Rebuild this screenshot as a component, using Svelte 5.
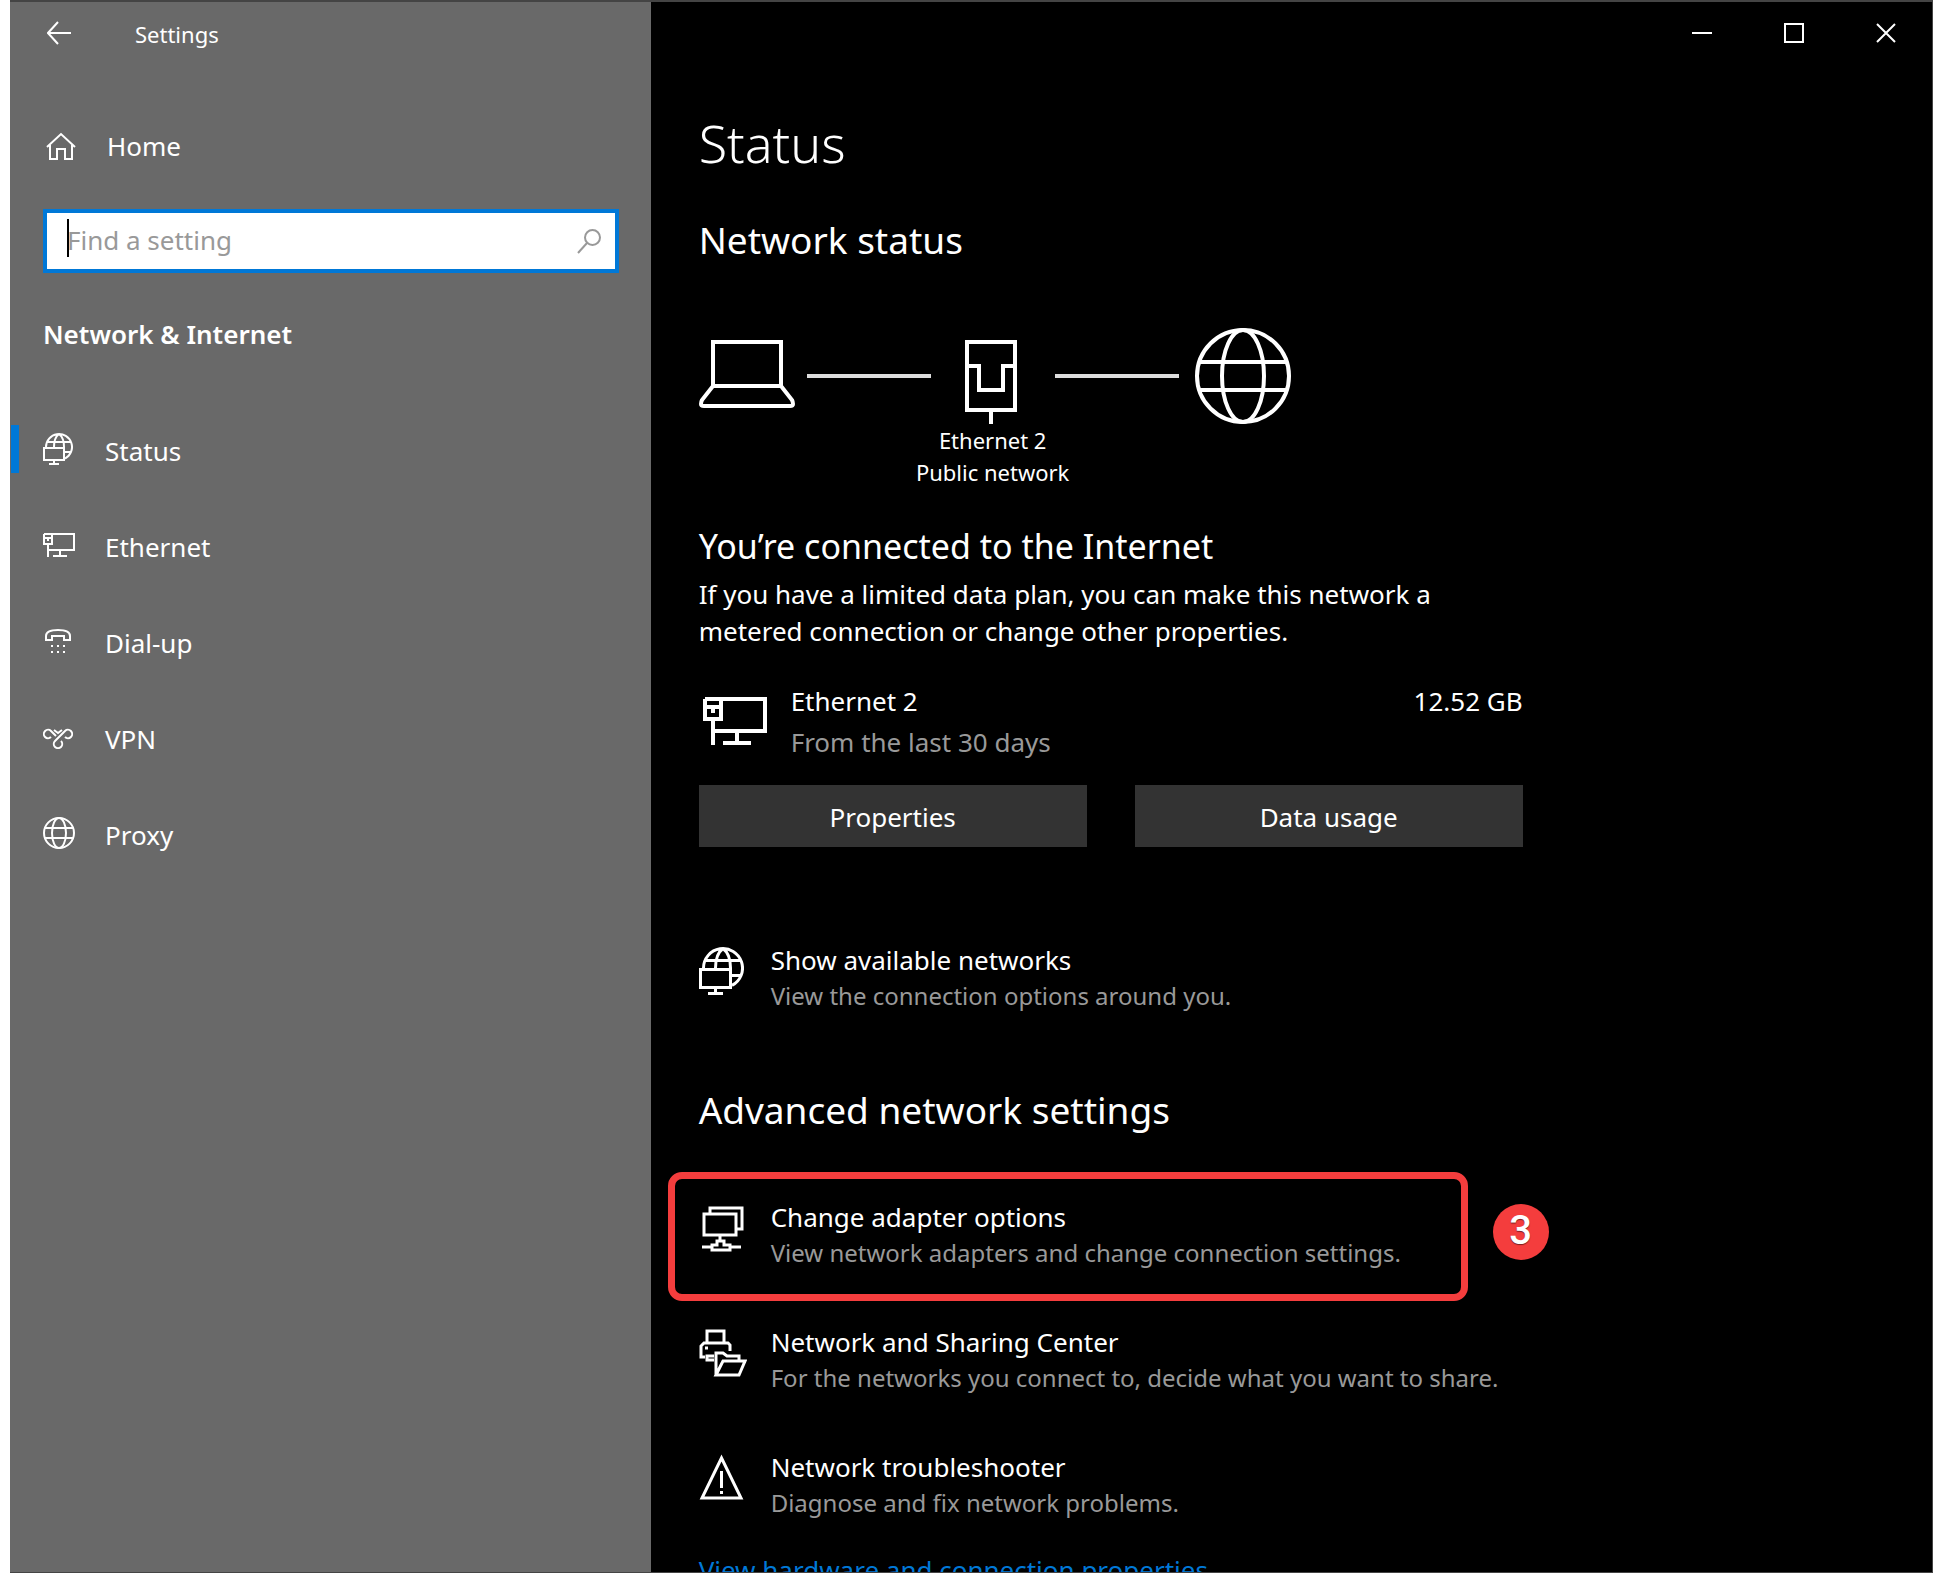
<script>
    let query = '';

    const navItems = [
        { label: 'Status', icon: 'globeMonitor', active: true },
        { label: 'Ethernet', icon: 'ethernet' },
        { label: 'Dial-up', icon: 'phone' },
        { label: 'VPN', icon: 'vpn' },
        { label: 'Proxy', icon: 'globe' }
    ];

    const advanced = [
        {
            title: 'Change adapter options',
            text: 'View network adapters and change connection settings.',
            icon: 'adapter',
            step: 3
        },
        {
            title: 'Network and Sharing Center',
            text: 'For the networks you connect to, decide what you want to share.',
            icon: 'sharing'
        },
        {
            title: 'Network troubleshooter',
            text: 'Diagnose and fix network problems.',
            icon: 'warning'
        }
    ];
</script>

{#snippet icon(name, scale = 1)}
    {#if name === 'globeMonitor'}
        <svg class="icon" width={30 * scale} height={32 * scale} viewBox="0 0 30 32">
            <path d="M3 14A13 13 0 1 1 22 25.6M4 9H28M21 19H28M16 1C12 4 11 9 11 14M16 1C20 4 21 9 21 14" />
            <path d="M1 15H21V27H1ZM11 27V31M6 31H16" />
        </svg>
    {:else if name === 'ethernet'}
        <svg class="icon" width={32 * scale} height={24 * scale} viewBox="0 0 32 24">
            <path d="M1 1H31V17H5M9 1V11H1V1M1 5H9M5 5V8M5 11V24M17 17V23M10 23H24" />
        </svg>
    {:else if name === 'phone'}
        <svg class="icon" width="30" height="24" viewBox="-2 0 30 24">
            <path d="M1 11V7C1 3 6 1 13 1S25 3 25 7V11H19V7H7V11Z" />
            <path d="M6 17H8M12 17H14M18 17H20M6 23H8M12 23H14M18 23H20" />
        </svg>
    {:else if name === 'vpn'}
        <svg class="icon" width="30" height="24" viewBox="0 -4 30 24">
            <path d="M8 8A4.200 4.200 0 1 1 8 2L13 7M11 1L15 4L19 1M22 8A4.200 4.200 0 1 0 22 2L12 12A4.200 4.200 0 1 0 18 12" />
        </svg>
    {:else if name === 'globe'}
        <svg class="icon" width="32" height="32" viewBox="0 0 32 32">
            <circle cx="16" cy="16" r="15" />
            <ellipse cx="16" cy="16" rx="7" ry="15" />
            <path d="M2 11H30M2 21H30" />
        </svg>
    {:else if name === 'adapter'}
        <svg class="icon thick" width="48" height="48" viewBox="0 0 48 48">
            <path d="M11 9V4H43V25H38M5 10H37V31H5ZM21 31V36M3 43H13M32 43H42M13 41H18V37H25V41H31V46H13Z" />
        </svg>
    {:else if name === 'sharing'}
        <svg class="icon thick" width="48" height="48" viewBox="0 0 48 48">
            <path d="M8 13V2H25V13M6 28H2V17L5 14H29L31 16V22M15 27H8V31H15M6 19H9" />
            <path d="M17 46V24H24L28 27H40V31M17 46L24 32H46L40 46Z" />
        </svg>
    {:else if name === 'warning'}
        <svg class="icon thick" width="45" height="48" viewBox="0 0 45 48">
            <path d="M22.500 4L42 44H3ZM22.500 17V34M22.500 37V40" />
        </svg>
    {/if}
{/snippet}

{#snippet linkRow(item)}
    <a class="row" class:marked={item.step} href="#{item.icon}">
        <span class="row-icon">{@render icon(item.icon, 1.5)}</span>
        <span class="row-text">
            <span>{item.title}</span>
            <span class="hint">{item.text}</span>
        </span>
        {#if item.step}
            <span class="step">{item.step}</span>
        {/if}
    </a>
{/snippet}

<div class="window">
    <aside class="sidebar">
        <header class="title-bar">
            <button class="back" aria-label="Back">
                <svg class="icon" width="24" height="28" viewBox="0 0 24 28">
                    <path d="M24 13H1M11 2L1 13L11 24" />
                </svg>
            </button>
            <span>Settings</span>
        </header>

        <a class="home" href="#home">
            <svg class="icon" width="30" height="28" viewBox="0 0 30 28">
                <path d="M1 15L15 2L29 15M4 13V27H11V17H19V27H26V13" />
            </svg>
            <span>Home</span>
        </a>

        <label class="search">
            <input type="text" placeholder="Find a setting" aria-label="Find a setting" bind:value={query} />
            <span class="caret"></span>
            <svg class="icon" width="24" height="25" viewBox="0 0 24 25">
                <circle cx="15.500" cy="8.500" r="7.500" />
                <path d="M10 14L1 24" />
            </svg>
        </label>

        <h2>Network &amp; Internet</h2>

        <nav>
            {#each navItems as item}
                <a class:active={item.active} href="#{item.label}">
                    <span class="nav-icon">{@render icon(item.icon)}</span>
                    <span class="nav-label">{item.label}</span>
                </a>
            {/each}
        </nav>
    </aside>

    <main>
        <div class="controls">
            <button aria-label="Minimize">
                <svg class="icon" width="20" height="20" viewBox="0 0 20 20"><path d="M0 10H20" /></svg>
            </button>
            <button aria-label="Maximize">
                <svg class="icon" width="20" height="20" viewBox="0 0 20 20"><path d="M1 1H19V19H1Z" /></svg>
            </button>
            <button aria-label="Close">
                <svg class="icon" width="20" height="20" viewBox="0 0 20 20"><path d="M1 1L19 19M19 1L1 19" /></svg>
            </button>
        </div>

        <div class="content">
            <h1>Status</h1>
            <h3>Network status</h3>

            <div class="diagram">
                <svg class="icon wide" width="96" height="72" viewBox="0 0 96 72">
                    <path d="M14 2H82V46H14ZM14 46L3 60Q2 62 2 64Q2 66 5 66H91Q94 66 94 64Q94 62 93 60L82 46" />
                </svg>
                <span class="wire"></span>
                <div class="adapter">
                    <svg class="icon wide" width="52" height="84" viewBox="0 0 52 84">
                        <path d="M2 2H50V70H2ZM2 26H14V50H38V26H50M26 70V84" />
                    </svg>
                </div>
                <span class="wire"></span>
                <svg class="icon wide internet" width="96" height="96" viewBox="0 0 96 96">
                    <circle cx="48" cy="48" r="46" />
                    <ellipse cx="48" cy="48" rx="21" ry="46" />
                    <path d="M5 34H91M5 62H91" />
                </svg>
            </div>
            <p class="caption">Ethernet 2<br />Public network</p>

            <h3 class="connected">You’re connected to the Internet</h3>
            <p class="plan">If you have a limited data plan, you can make this network a metered connection or change other properties.</p>

            <div class="usage">
                <span class="usage-icon">{@render icon('ethernet', 2)}</span>
                <div class="usage-text">
                    <span>Ethernet 2</span>
                    <span class="muted">From the last 30 days</span>
                </div>
                <span>12.52 GB</span>
            </div>
            <div class="buttons">
                <button>Properties</button>
                <button>Data usage</button>
            </div>

            {@render linkRow({
                title: 'Show available networks',
                text: 'View the connection options around you.',
                icon: 'globeMonitor'
            })}

            <h3 class="advanced">Advanced network settings</h3>
            <div class="rows">
                {#each advanced as item}
                    {@render linkRow(item)}
                {/each}
            </div>

            <a class="more" href="#hardware">View hardware and connection properties</a>
        </div>
    </main>
</div>

<style>
    :global(body) {
        background: #fff;
    }

    .window {
        display: grid;
        grid-template-columns: 1fr 2fr;
        box-sizing: border-box;
        height: calc(100vh - 7px);
        margin: 0 8px 0 10px;
        overflow: hidden;
        border: solid #444;
        border-width: 2px 1px 1px 0;
        background: #000;
        color: #fff;
        font-family: 'Noto Sans', 'Open Sans', sans-serif;
        font-size: 26px;
        line-height: 35px;
    }

    h1,
    h2,
    h3,
    p {
        margin: 0;
        font-weight: 400;
    }

    a {
        color: inherit;
        text-decoration: none;
    }

    button {
        padding: 0;
        border: 0;
        background: none;
        color: inherit;
        font: inherit;
    }

    .icon {
        display: block;
        flex: none;
        fill: none;
        stroke: currentColor;
        stroke-width: 2;
    }

    .icon.thick {
        stroke-width: 3;
    }

    .icon.wide {
        stroke-width: 4;
    }

    .sidebar {
        background: #696969;
    }

    .title-bar {
        display: flex;
        align-items: center;
        gap: 64px;
        height: 64px;
        padding-left: 37px;
        font-size: 22px;
    }

    .home {
        display: flex;
        align-items: center;
        gap: 31px;
        height: 64px;
        margin-top: 48px;
        padding-left: 36px;
    }

    .search {
        display: flex;
        position: relative;
        align-items: center;
        box-sizing: border-box;
        height: 64px;
        margin: 31px 32px 0 33px;
        padding: 0 14px 0 20px;
        border: 4px solid #0078d7;
        background: #fff;
        color: #999;
    }

    .search input {
        flex: 1;
        min-width: 0;
        padding: 0 0 2px;
        border: 0;
        outline: 0;
        background: none;
        color: #000;
        font: inherit;
    }

    .search input::placeholder {
        color: #999;
        opacity: 1;
    }

    .caret {
        position: absolute;
        top: 6px;
        left: 20px;
        width: 2px;
        height: 38px;
        background: #000;
    }

    h2 {
        margin: 44px 0 0 33px;
        font-size: 26px;
        font-weight: 600;
    }

    nav {
        margin-top: 49px;
    }

    nav a {
        display: flex;
        position: relative;
        align-items: center;
        height: 96px;
        padding-left: 33px;
    }

    nav a.active::before {
        position: absolute;
        left: 1px;
        width: 8px;
        height: 48px;
        background: #0078d7;
        content: '';
    }

    .nav-icon {
        display: flex;
        width: 62px;
    }

    .nav-label {
        padding-top: 4px;
    }

    main {
        min-width: 0;
    }

    .controls {
        display: flex;
        justify-content: flex-end;
    }

    .controls button {
        display: flex;
        align-items: center;
        justify-content: center;
        width: 92px;
        height: 62px;
    }

    .content {
        max-width: 824px;
        padding: 43px 48px 0;
    }

    h1 {
        font-size: 52px;
        font-weight: 350;
        line-height: 72px;
    }

    h3 {
        font-size: 37px;
        line-height: 48px;
    }

    h1 + h3 {
        margin-top: 37px;
    }

    .diagram {
        display: flex;
        align-items: center;
        gap: 12px;
        margin-top: 64px;
    }

    .wire {
        width: 124px;
        height: 4px;
        background: #ddd;
    }

    .adapter {
        display: flex;
        box-sizing: border-box;
        justify-content: center;
        width: 100px;
        padding: 12px 4px 0 0;
    }

    .internet {
        margin-left: 4px;
    }

    .caption {
        width: 588px;
        font-size: 22px;
        line-height: 32px;
        text-align: center;
    }

    .connected {
        margin-top: 34px;
        font-size: 34px;
    }

    .plan {
        margin-top: 6px;
        line-height: 37px;
    }

    .usage {
        display: flex;
        margin-top: 34px;
    }

    .usage-icon {
        width: 88px;
        padding: 13px 0 0 4px;
    }

    .usage-text {
        display: grid;
        flex: 1;
        gap: 6px;
    }

    .muted,
    .hint {
        color: #999;
    }

    .hint {
        font-size: 24px;
    }

    .buttons {
        display: grid;
        grid-template-columns: 1fr 1fr;
        gap: 48px;
        margin: 25px 0 96px;
    }

    .buttons button {
        height: 62px;
        padding-top: 2px;
        background: #333;
    }

    .row {
        display: flex;
        position: relative;
    }

    .row-icon {
        width: 72px;
        padding-top: 4px;
    }

    .row-text {
        display: grid;
        white-space: nowrap;
    }

    .marked::before {
        position: absolute;
        inset: -28px 55px -31px -31px;
        border: 7px solid #f43d3d;
        border-radius: 14px;
        content: '';
    }

    .step {
        position: absolute;
        top: 4px;
        right: -26px;
        width: 56px;
        height: 56px;
        border-radius: 50%;
        background: #f43d3d;
        font-family: Roboto, sans-serif;
        font-size: 40px;
        font-weight: 500;
        line-height: 54px;
        text-align: center;
        text-shadow: 0 1px 1px rgba(0, 0, 0, 0.5);
    }

    .advanced {
        margin-top: 73px;
    }

    .rows {
        display: grid;
        gap: 55px;
        margin-top: 66px;
    }

    .more {
        display: block;
        margin-top: 33px;
        color: #0078d7;
    }
</style>
